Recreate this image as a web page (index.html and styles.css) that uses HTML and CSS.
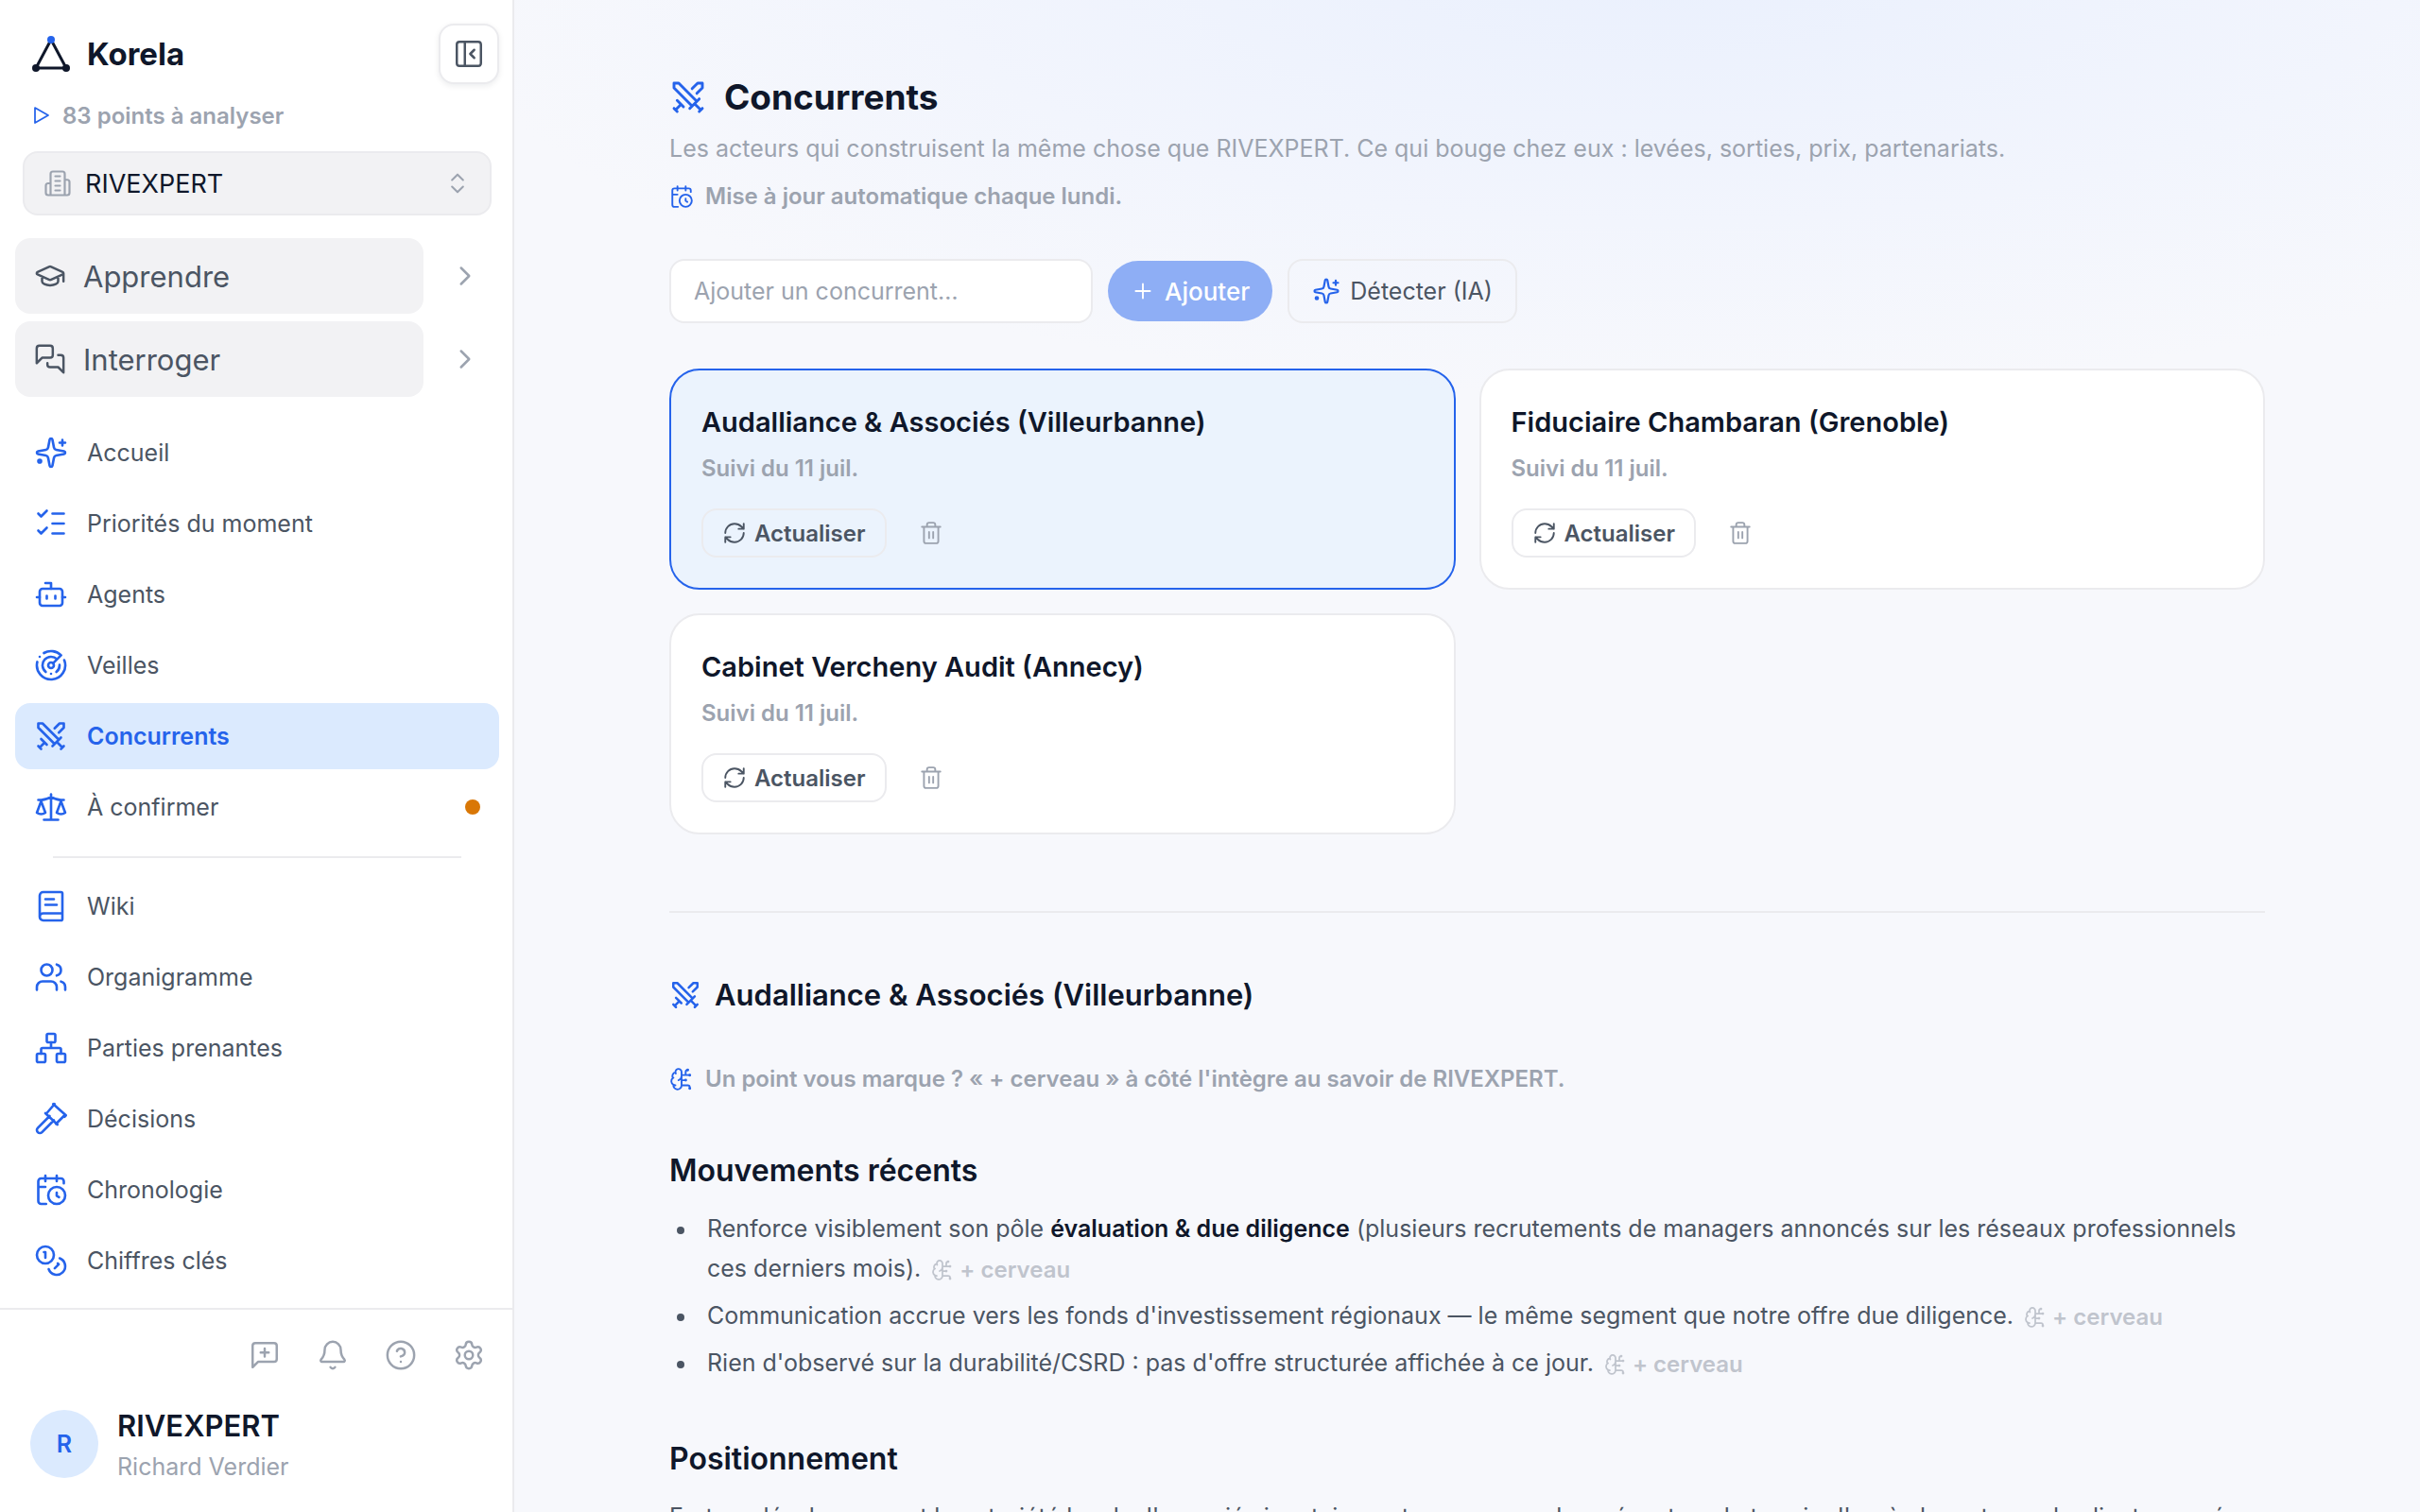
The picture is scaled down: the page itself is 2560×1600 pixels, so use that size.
FILE: index.html
```html
<!DOCTYPE html>
<html lang="fr">
<head>
<meta charset="utf-8">
<meta name="viewport" content="width=device-width, initial-scale=1">
<title>Concurrents – Korela</title>
<link rel="stylesheet" href="styles.css">
</head>
<body>
<svg class="sprite" aria-hidden="true">
  <symbol id="swords" viewBox="0 0 24 24"><path d="M14.5 17.5 3 6V3h3l11.5 11.5M13 19l6-6M16 16l4 4M19 21l2-2M14.5 6.5 18 3h3v3l-3.5 3.5M5 14l4 4M7 17l-3 3M3 19l2 2"/></symbol>
  <symbol id="sparkles" viewBox="0 0 24 24"><path d="M11.017 2.814a1 1 0 0 1 1.966 0l1.051 5.558a2 2 0 0 0 1.594 1.594l5.558 1.051a1 1 0 0 1 0 1.966l-5.558 1.051a2 2 0 0 0-1.594 1.594l-1.051 5.558a1 1 0 0 1-1.966 0l-1.051-5.558a2 2 0 0 0-1.594-1.594l-5.558-1.051a1 1 0 0 1 0-1.966l5.558-1.051a2 2 0 0 0 1.594-1.594zM20 3v4M22 5h-4"/><circle cx="4" cy="18" r="1"/></symbol>
  <symbol id="calendar-clock" viewBox="0 0 24 24"><path d="M16 14v2.2l1.6 1M16 2v4M21 7.5V6a2 2 0 0 0-2-2H5a2 2 0 0 0-2 2v14a2 2 0 0 0 2 2h3.5M3 10h5M8 2v4"/><circle cx="16" cy="16" r="6"/></symbol>
  <symbol id="brain" viewBox="0 0 24 24"><path d="M12 5a3 3 0 1 0-5.997.125 4 4 0 0 0-2.526 5.77 4 4 0 0 0 .556 6.588A4 4 0 1 0 12 18ZM9 13a4.500 4.500 0 0 0 3-4M6.003 5.125A3 3 0 0 0 6.401 6.500M3.477 10.896a4 4 0 0 1 .585-.396M6 18a4 4 0 0 1-1.967-.516M12 13h4M12 18h6a2 2 0 0 1 2 2v1M12 8h8M16 8V5a2 2 0 0 1 2-2"/><circle cx="16" cy="13" r=".5"/><circle cx="18" cy="3" r=".5"/><circle cx="20" cy="21" r=".5"/><circle cx="20" cy="8" r=".5"/></symbol>
  <symbol id="refresh" viewBox="0 0 24 24"><path d="M3 12a9 9 0 0 1 9-9 9.750 9.750 0 0 1 6.740 2.740L21 8M21 3v5h-5M21 12a9 9 0 0 1-9 9 9.750 9.750 0 0 1-6.740-2.740L3 16M8 16H3v5"/></symbol>
  <symbol id="trash" viewBox="0 0 24 24"><path d="M3 6h18M19 6v14a2 2 0 0 1-2 2H7a2 2 0 0 1-2-2V6M8 6V4a2 2 0 0 1 2-2h4a2 2 0 0 1 2 2v2M10 11v6M14 11v6"/></symbol>
  <symbol id="chevron" viewBox="0 0 24 24"><path d="m9 18 6-6-6-6"/></symbol>
</svg>

<div class="app">
  <aside class="sidebar">
    <header class="brand-row">
      <a class="brand" href="#">
        <svg class="logo" viewBox="0 0 40 40" aria-hidden="true"><path d="M20 5 4 35h32Z" fill="none" stroke="#0f172a" stroke-width="3"/><circle cx="20" cy="5" r="4" fill="#2563eb"/><circle cx="4" cy="35" r="4" fill="#0f172a"/><circle cx="36" cy="35" r="4" fill="#0f172a"/></svg>
        <span>Korela</span>
      </a>
      <button class="collapse" type="button" aria-label="Réduire le menu"><svg class="icon i34" viewBox="0 0 24 24"><rect x="3" y="3" width="18" height="18" rx="2"/><path d="M9 3v18M16 15l-3-3 3-3"/></svg></button>
    </header>
    <a class="pending" href="#"><svg class="icon i24" viewBox="0 0 24 24"><path d="M5 4l14 8-14 8z"/></svg>83 points à analyser</a>
    <button class="org" type="button">
      <svg class="icon i30" viewBox="0 0 24 24"><path d="M6 22V4a2 2 0 0 1 2-2h8a2 2 0 0 1 2 2v18ZM6 12H4a2 2 0 0 0-2 2v6a2 2 0 0 0 2 2h2M18 9h2a2 2 0 0 1 2 2v9a2 2 0 0 1-2 2h-2M10 6h4M10 10h4M10 14h4M10 18h4"/></svg>
      <span>RIVEXPERT</span>
      <svg class="icon i28" viewBox="0 0 24 24"><path d="m7 15 5 5 5-5M7 9l5-5 5 5"/></svg>
    </button>

    <div class="modes">
      <div class="mode"><button class="mode-main" type="button"><svg class="icon i34" viewBox="0 0 24 24"><path d="M21.420 10.922a1 1 0 0 0-.019-1.838L12.830 5.180a2 2 0 0 0-1.660 0L2.600 9.080a1 1 0 0 0 0 1.832l8.570 3.908a2 2 0 0 0 1.660 0zM22 10v6M6 12.500V16a6 3 0 0 0 12 0v-3.500"/></svg>Apprendre</button><button class="mode-more" type="button" aria-label="Ouvrir Apprendre"><svg class="icon i34"><use href="#chevron"/></svg></button></div>
      <div class="mode"><button class="mode-main" type="button"><svg class="icon i34" viewBox="0 0 24 24"><path d="M14 9a2 2 0 0 1-2 2H6l-4 4V4a2 2 0 0 1 2-2h8a2 2 0 0 1 2 2zM18 9h2a2 2 0 0 1 2 2v11l-4-4h-6a2 2 0 0 1-2-2v-1"/></svg>Interroger</button><button class="mode-more" type="button" aria-label="Ouvrir Interroger"><svg class="icon i34"><use href="#chevron"/></svg></button></div>
    </div>

    <nav class="nav">
      <a href="#"><svg class="icon i36"><use href="#sparkles"/></svg>Accueil</a>
      <a href="#"><svg class="icon i36" viewBox="0 0 24 24"><path d="M13 5h8M13 12h8M13 19h8M3 17l2 2 4-4M3 5l2 2 4-4"/></svg>Priorités du moment</a>
      <a href="#"><svg class="icon i36" viewBox="0 0 24 24"><path d="M12 8V4H8M2 14h2M20 14h2M15 13v2M9 13v2"/><rect x="4" y="8" width="16" height="12" rx="2"/></svg>Agents</a>
      <a href="#"><svg class="icon i36" viewBox="0 0 24 24"><path d="M19.070 4.930A10 10 0 0 0 6.990 3.340M4 6h.01M2.290 9.620A10 10 0 1 0 21.310 8.350M16.240 7.760A6 6 0 1 0 8.230 16.670M12 18h.01M17.990 11.660A6 6 0 0 1 15.770 16.670M13.410 10.590l5.660-5.660"/><circle cx="12" cy="12" r="2"/></svg>Veilles</a>
      <a class="active" href="#" aria-current="page"><svg class="icon i36"><use href="#swords"/></svg>Concurrents</a>
      <a href="#"><svg class="icon i36" viewBox="0 0 24 24"><path d="m16 16 3-8 3 8c-.87.650-1.920 1-3 1s-2.130-.350-3-1ZM2 16l3-8 3 8c-.87.650-1.920 1-3 1s-2.130-.350-3-1ZM7 21h10M12 3v18M3 7h2c2 0 5-1 7-2 2 1 5 2 7 2h2"/></svg>À confirmer<span class="dot"></span></a>
      <hr>
      <a href="#"><svg class="icon i36" viewBox="0 0 24 24"><path d="M4 19.500v-15A2.500 2.500 0 0 1 6.500 2H19a1 1 0 0 1 1 1v18a1 1 0 0 1-1 1H6.500a1 1 0 0 1 0-5H20M8 11h8M8 7h6"/></svg>Wiki</a>
      <a href="#"><svg class="icon i36" viewBox="0 0 24 24"><path d="M16 21v-2a4 4 0 0 0-4-4H6a4 4 0 0 0-4 4v2M16 3.128a4 4 0 0 1 0 7.744M22 21v-2a4 4 0 0 0-3-3.870"/><circle cx="9" cy="7" r="4"/></svg>Organigramme</a>
      <a href="#"><svg class="icon i36" viewBox="0 0 24 24"><rect x="16" y="16" width="6" height="6" rx="1"/><rect x="2" y="16" width="6" height="6" rx="1"/><rect x="9" y="2" width="6" height="6" rx="1"/><path d="M5 16v-3a1 1 0 0 1 1-1h12a1 1 0 0 1 1 1v3M12 12V8"/></svg>Parties prenantes</a>
      <a href="#"><svg class="icon i36" viewBox="0 0 24 24"><path d="m14 13-8.381 8.380a1 1 0 0 1-3.001-3L11 9.999M15.500 15.500l6-6M21.500 10.500l1-1M13.500 1.500l9 8M8.500 8.500l6-7M8 8l8.500 8"/></svg>Décisions</a>
      <a href="#"><svg class="icon i36"><use href="#calendar-clock"/></svg>Chronologie</a>
      <a href="#"><svg class="icon i36" viewBox="0 0 24 24"><circle cx="8" cy="8" r="6"/><path d="M18.090 10.370A6 6 0 1 1 10.340 18M7 6h1v4M16.710 13.880l.7.710-2.820 2.820"/></svg>Chiffres clés</a>
    </nav>

    <footer class="side-foot">
      <div class="tools">
        <button type="button" aria-label="Donner un avis"><svg class="icon i34" viewBox="0 0 24 24"><path d="M21 15a2 2 0 0 1-2 2H7l-4 4V5a2 2 0 0 1 2-2h14a2 2 0 0 1 2 2zM12 7v6M9 10h6"/></svg></button>
        <button type="button" aria-label="Notifications"><svg class="icon i34" viewBox="0 0 24 24"><path d="M10.268 21a2 2 0 0 0 3.464 0M3.262 15.326A1 1 0 0 0 4 17h16a1 1 0 0 0 .740-1.673C19.410 13.956 18 12.499 18 8A6 6 0 0 0 6 8c0 4.499-1.411 5.956-2.738 7.326"/></svg></button>
        <button type="button" aria-label="Aide"><svg class="icon i34" viewBox="0 0 24 24"><circle cx="12" cy="12" r="10"/><path d="M9.090 9a3 3 0 0 1 5.830 1c0 2-3 3-3 3M12 17h.01"/></svg></button>
        <button type="button" aria-label="Réglages"><svg class="icon i34" viewBox="0 0 24 24"><path d="M9.671 4.136a2.340 2.340 0 0 1 4.659 0 2.340 2.340 0 0 0 3.319 1.915 2.340 2.340 0 0 1 2.330 4.033 2.340 2.340 0 0 0 0 3.831 2.340 2.340 0 0 1-2.330 4.033 2.340 2.340 0 0 0-3.319 1.915 2.340 2.340 0 0 1-4.659 0 2.340 2.340 0 0 0-3.320-1.915 2.340 2.340 0 0 1-2.330-4.033 2.340 2.340 0 0 0 0-3.831A2.340 2.340 0 0 1 6.350 6.051a2.340 2.340 0 0 0 3.319-1.915"/><circle cx="12" cy="12" r="3"/></svg></button>
      </div>
      <div class="user"><span class="avatar">R</span><div><div class="user-org">RIVEXPERT</div><div class="user-name">Richard Verdier</div></div></div>
    </footer>
  </aside>

  <main class="main">
    <div class="content">
      <h1><svg class="icon i40"><use href="#swords"/></svg>Concurrents</h1>
      <p class="lead">Les acteurs qui construisent la même chose que RIVEXPERT. Ce qui bouge chez eux : levées, sorties, prix, partenariats.</p>
      <p class="hint"><svg class="icon i26"><use href="#calendar-clock"/></svg>Mise à jour automatique chaque lundi.</p>

      <form class="add">
        <input type="text" placeholder="Ajouter un concurrent…" aria-label="Ajouter un concurrent">
        <button class="primary" type="button"><svg class="icon i26" viewBox="0 0 24 24"><path d="M5 12h14M12 5v14"/></svg>Ajouter</button>
        <button class="detect" type="button"><svg class="icon i30"><use href="#sparkles"/></svg>Détecter (IA)</button>
      </form>

      <div class="cards">
        <article class="card selected"><h2>Audalliance &amp; Associés (Villeurbanne)</h2><p>Suivi du 11 juil.</p><div class="actions"><button class="refresh" type="button"><svg class="icon i26"><use href="#refresh"/></svg>Actualiser</button><button class="delete" type="button" aria-label="Supprimer"><svg class="icon i26"><use href="#trash"/></svg></button></div></article>
        <article class="card"><h2>Fiduciaire Chambaran (Grenoble)</h2><p>Suivi du 11 juil.</p><div class="actions"><button class="refresh" type="button"><svg class="icon i26"><use href="#refresh"/></svg>Actualiser</button><button class="delete" type="button" aria-label="Supprimer"><svg class="icon i26"><use href="#trash"/></svg></button></div></article>
        <article class="card"><h2>Cabinet Vercheny Audit (Annecy)</h2><p>Suivi du 11 juil.</p><div class="actions"><button class="refresh" type="button"><svg class="icon i26"><use href="#refresh"/></svg>Actualiser</button><button class="delete" type="button" aria-label="Supprimer"><svg class="icon i26"><use href="#trash"/></svg></button></div></article>
      </div>

      <section class="detail">
        <h2><svg class="icon i34"><use href="#swords"/></svg>Audalliance &amp; Associés (Villeurbanne)</h2>
        <p class="hint"><svg class="icon i26"><use href="#brain"/></svg>Un point vous marque ? « + cerveau » à côté l'intègre au savoir de RIVEXPERT.</p>
        <h3>Mouvements récents</h3>
        <ul>
          <li>Renforce visiblement son pôle <strong>évaluation &amp; due diligence</strong> (plusieurs recrutements de managers annoncés sur les réseaux professionnels ces derniers mois). <button class="learn" type="button"><svg class="icon i24"><use href="#brain"/></svg>+ cerveau</button></li>
          <li>Communication accrue vers les fonds d'investissement régionaux — le même segment que notre offre due diligence. <button class="learn" type="button"><svg class="icon i24"><use href="#brain"/></svg>+ cerveau</button></li>
          <li>Rien d'observé sur la durabilité/CSRD : pas d'offre structurée affichée à ce jour. <button class="learn" type="button"><svg class="icon i24"><use href="#brain"/></svg>+ cerveau</button></li>
        </ul>
        <h3>Positionnement</h3>
        <p class="body">Fort en développement la notoriété locale, l'associé signataire reste une approche présent sur le terrain d'après les retours de clients passés.</p>
      </section>
    </div>
  </main>
</div>
</body>
</html>
```
FILE: styles.css
```css
* { box-sizing: border-box; }
body, h1, h2, h3, p, ul { margin: 0; }
body {
  font-family: Inter, "Liberation Sans", sans-serif;
  font-size: 25px;
  color: #4b5563;
  background: #f7f8fc;
}
button, input { font: inherit; color: inherit; margin: 0; }
button { display: inline-flex; align-items: center; border: 0; background: none; padding: 0; }
a { color: inherit; text-decoration: none; }
.sprite { position: absolute; width: 0; height: 0; }
.icon { flex: none; fill: none; stroke: currentColor; stroke-width: 1.75; stroke-linecap: round; stroke-linejoin: round; }
.i24 { width: 24px; height: 24px; }
.i26 { width: 26px; height: 26px; }
.i28 { width: 28px; height: 28px; }
.i30 { width: 30px; height: 30px; }
.i34 { width: 34px; height: 34px; }
.i36 { width: 36px; height: 36px; }
.i40 { width: 40px; height: 40px; }

.app { display: grid; grid-template-columns: 544px 1fr; height: 100vh; overflow: hidden; }

.sidebar { display: flex; flex-direction: column; min-height: 0; background: #fff; border-right: 2px solid #ebebee; }
.brand-row { display: flex; align-items: center; justify-content: space-between; padding: 25px 14px 0 34px; }
.brand { display: flex; align-items: center; gap: 18px; font-size: 33px; font-weight: 700; color: #0f172a; }
.logo { width: 40px; height: 40px; }
.collapse { width: 64px; height: 64px; justify-content: center; border: 2px solid #ebebee; border-radius: 16px; background: #fff; box-shadow: 0 2px 6px rgba(15, 23, 42, .08); }
.pending { display: flex; align-items: center; gap: 10px; height: 36px; margin: 15px 0 0 32px; font-size: 24px; font-weight: 600; color: #9ca3af; }
.pending .icon { color: #2563eb; }
.org { display: flex; gap: 14px; height: 68px; margin: 20px 22px 0 24px; padding: 0 20px; border: 2px solid #ebebee; border-radius: 16px; background: #f2f2f4; color: #0f172a; font-size: 27px; text-align: left; }
.org span { flex: 1; }
.org .icon { color: #9ca3af; }
.modes { display: grid; gap: 8px; margin: 24px 14px 0 16px; }
.mode { display: flex; gap: 8px; }
.mode-main { flex: 1; gap: 18px; height: 80px; padding: 0 20px; border-radius: 16px; background: #f2f2f4; font-size: 31px; }
.mode-more { width: 72px; justify-content: center; color: #9ca3af; }
.nav { display: flex; flex-direction: column; gap: 5px; flex: 1; min-height: 0; overflow: hidden; padding: 24px 14px 0 16px; }
.nav a { display: flex; align-items: center; flex: none; gap: 20px; height: 70px; padding: 0 20px; border-radius: 16px; }
.nav .icon { color: #2563eb; }
.nav .active { background: #dbeafe; color: #2563eb; font-weight: 600; }
.nav hr { width: calc(100% - 80px); height: 2px; margin: 12px auto 11px; border: 0; background: #ebebee; flex: none; }
.dot { width: 16px; height: 16px; margin-left: auto; border-radius: 50%; background: #d97706; }
.side-foot { flex: none; height: 216px; padding: 22px 18px 0 32px; border-top: 2px solid #ebebee; }
.tools { display: flex; justify-content: flex-end; gap: 16px; color: #9ca3af; }
.tools button { width: 56px; height: 52px; justify-content: center; }
.user { display: flex; align-items: center; gap: 20px; margin-top: 23px; }
.avatar { display: grid; place-items: center; width: 72px; height: 72px; border-radius: 50%; background: #dbeafe; color: #2563eb; font-weight: 600; }
.user-org { padding-top: 4px; font-size: 31px; line-height: 44px; font-weight: 600; color: #0f172a; }
.user-name { line-height: 42px; color: #9ca3af; }

.main { min-width: 0; overflow: hidden; padding: 72px 160px 0; background: radial-gradient(ellipse 1300px 460px at 60% -40px, #eaf0fd, #f2f5fd 60%, #f7f8fc); }
.content { max-width: 1688px; margin: 0 auto; }
h1 { display: flex; align-items: center; gap: 18px; font-size: 37px; line-height: 62px; font-weight: 700; color: #0f172a; }
h1 .icon, h2 .icon, .hint .icon, .detect .icon { color: #2563eb; }
.lead { line-height: 46px; color: #9ca3af; }
.hint { display: flex; align-items: center; gap: 12px; font-size: 24px; line-height: 36px; font-weight: 600; color: #9ca3af; }
.lead + .hint { margin-top: 10px; }
.add { display: flex; align-items: center; gap: 16px; margin-top: 48px; }
.add input { width: 448px; height: 68px; padding: 0 24px; border: 2px solid #ebebee; border-radius: 16px; background: #fff; outline: 0; }
.add input::placeholder { color: #9ca3af; opacity: 1; }
.primary { gap: 10px; height: 64px; padding: 0 24px; border-radius: 32px; background: #8eaef5; color: #fff; font-size: 26px; font-weight: 500; }
.detect { gap: 10px; height: 68px; padding: 0 24px; border: 2px solid #ebebee; border-radius: 16px; }
.cards { display: grid; grid-template-columns: 1fr 1fr; gap: 25px; margin-top: 48px; }
.card { padding: 32px; border: 2px solid #ebebee; border-radius: 32px; background: #fff; }
.card.selected { border-color: #2563eb; background: rgba(223, 238, 254, .5); }
.card h2 { font-size: 29px; line-height: 46px; font-weight: 600; color: #0f172a; }
.card p { margin-top: 7px; font-size: 24px; line-height: 38px; font-weight: 600; color: #9ca3af; }
.actions { display: flex; align-items: center; gap: 34px; margin-top: 23px; }
.refresh { gap: 8px; height: 52px; padding: 0 20px; border: 2px solid #ebebee; border-radius: 16px; font-size: 24px; font-weight: 600; }
.delete { color: #9ca3af; }
.detail { margin-top: 81px; padding-top: 61px; border-top: 2px solid #ebebee; }
.detail h2 { display: flex; align-items: center; gap: 14px; font-size: 31px; line-height: 52px; font-weight: 600; color: #0f172a; }
.detail .hint { margin-top: 45px; }
.detail h3 { margin-top: 55px; font-size: 32px; line-height: 48px; font-weight: 600; color: #0f172a; }
.detail ul { margin-top: 16px; padding-left: 40px; line-height: 42px; list-style: none; }
.detail ul + h3 { margin-top: 57px; }
.detail li { text-indent: -32px; }
.detail li + li { margin-top: 8px; }
.detail li::before { content: ""; display: inline-block; width: 8px; height: 8px; margin-right: 24px; border-radius: 50%; background: #4b5563; vertical-align: middle; }
.detail strong { font-weight: 600; color: #0f172a; }
.learn { gap: 6px; margin-left: 4px; font-size: 24px; font-weight: 600; line-height: 36px; color: #9ca3af; opacity: .6; vertical-align: middle; text-indent: 0; }
.body { margin-top: 16px; line-height: 42px; }
```
